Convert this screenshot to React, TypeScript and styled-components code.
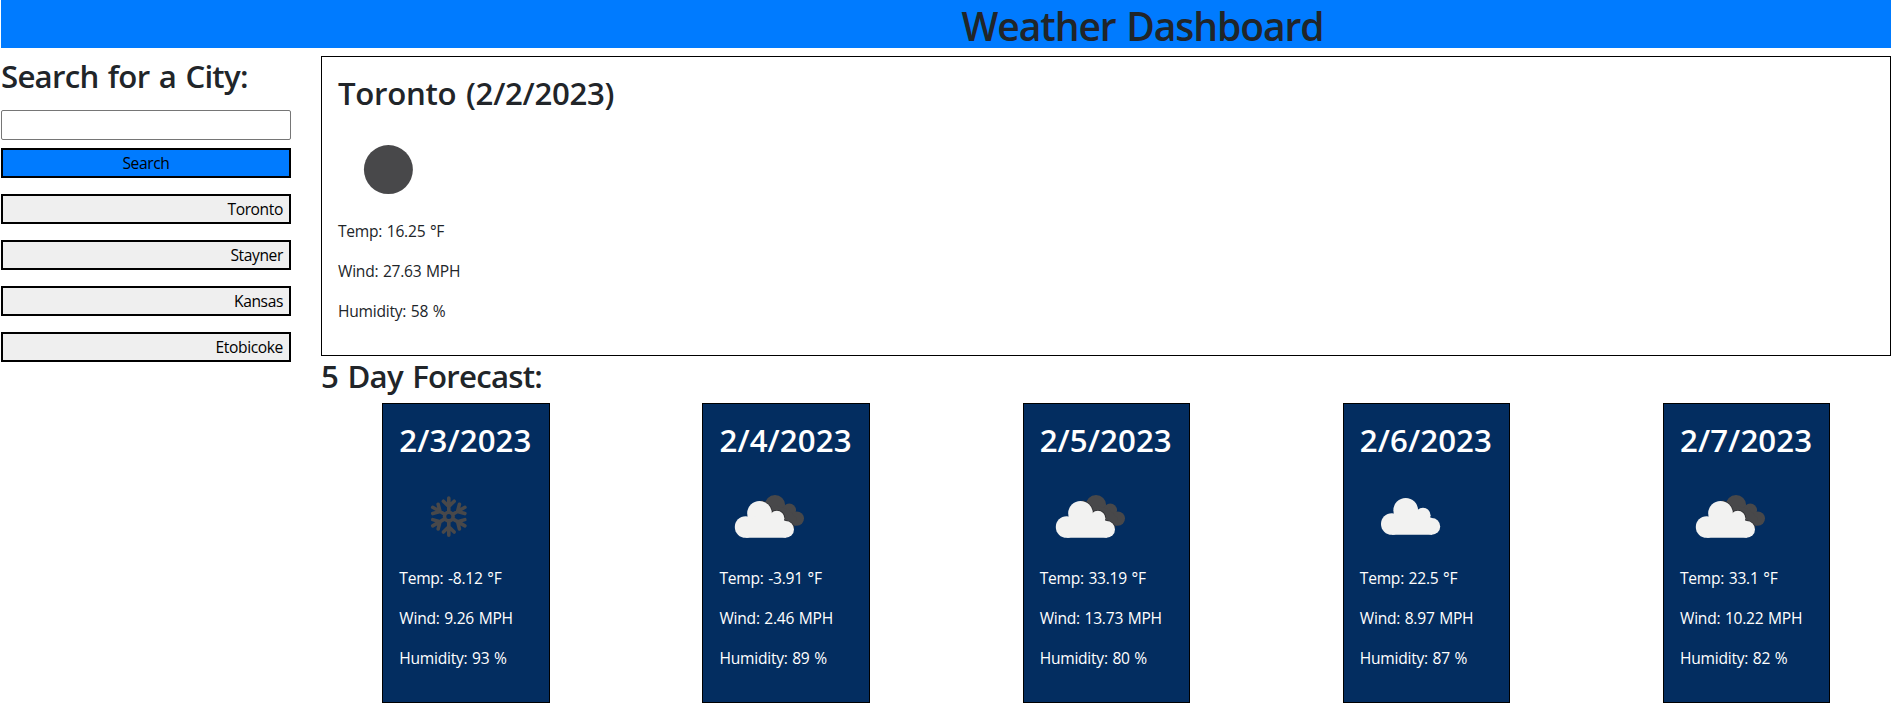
import React from "react";
import styled, { createGlobalStyle } from "styled-components";

const Global = createGlobalStyle`
  *, *::before, *::after { box-sizing: border-box; }
  body {
    margin: 0;
    background: #fff;
    color: #212529;
    font-family: "Open Sans", "Noto Sans", sans-serif;
    font-size: 15.6px;
    line-height: 24px;
    letter-spacing: -0.25px;
    word-spacing: 0.8px;
  }
`;

const Page = styled.div`padding: 0 3px 0 1px;`;

const Header = styled.header`
  height: 48px;
  padding-left: 393px;
  background: #007bff;
  text-align: center;
`;

const Title = styled.h1`
  margin: 0;
  padding-top: 2px;
  font-size: 39px;
  font-weight: 600;
  line-height: 48px;
  letter-spacing: -1.05px;
  word-spacing: 1.5px;
  white-space: nowrap;
`;

const Columns = styled.div`
  display: flex;
  gap: 30px;
  padding-top: 8px;
`;

const Sidebar = styled.aside`
  display: flex;
  flex-direction: column;
  width: 290px;
  flex: none;
`;

const Heading = styled.h2<{ $spacing?: number }>`
  margin: 0 0 7px;
  padding-top: 1px;
  font-size: 31.2px;
  font-weight: 600;
  line-height: 39px;
  letter-spacing: ${(p) => p.$spacing ?? -0.75}px;
  word-spacing: 2px;
  white-space: nowrap;
`;

const SearchInput = styled.input`
  height: 30px;
  margin: 7px 0 8px;
  border: 1px solid #767676;
  border-radius: 2px;
  background: #fff;
  font: inherit;
`;

const Button = styled.button<{ $primary?: boolean }>`
  height: 30px;
  margin: 0 0 16px;
  padding: 0 6px;
  border: 2px solid #000;
  background: ${(p) => (p.$primary ? "#007bff" : "#efefef")};
  color: #000;
  font: inherit;
  letter-spacing: -0.38px;
  line-height: 26px;
  text-align: ${(p) => (p.$primary ? "center" : "right")};
`;

const Main = styled.main`
  flex: 1;
  min-width: 0;
`;

const Panel = styled.section`
  height: 300px;
  padding: 16px;
  border: 1px solid #000;
`;

const Card = styled.article`
  width: 167.3px;
  height: 300px;
  padding: 16px;
  border: 1px solid #000;
  background: #032d60;
  color: #fff;
`;

const Forecast = styled.div`
  display: flex;
  justify-content: space-between;
  padding: 0 60.7px 0 61.3px;
`;

const Reading = styled.p`
  margin: 0 0 16px;
  white-space: nowrap;
`;

const Icon = styled.svg`
  display: block;
  width: 100px;
  height: 100px;
  margin-bottom: -1px;
`;

type Kind = "clear" | "snow" | "broken" | "cloudy";

function CloudShape({ x, y, outline }: { x: number; y: number; outline?: boolean }) {
  const shape = (
    <>
      <circle cx="10.8" cy="26" r="10.8" />
      <circle cx="24.7" cy="12.3" r="12.3" />
      <circle cx="42" cy="17.3" r="7.6" />
      <circle cx="50.8" cy="28.4" r="8.4" />
      <path d="M10.8 36.8H51L51 20L42 17L24 12L11 24Z" />
    </>
  );
  return (
    <g transform={`translate(${x} ${y})`}>
      {outline && (
        <>
          <clipPath id="behind"><path d="M27 -5H70V27H24Z" /></clipPath>
          <g clipPath="url(#behind)" fill="#303033" stroke="#303033" strokeWidth="1.6">{shape}</g>
        </>
      )}
      <g fill="#f2f2f1">{shape}</g>
    </g>
  );
}

function WeatherIcon({ kind }: { kind: Kind }) {
  return (
    <Icon viewBox="0 0 100 100">
      {kind === "clear" && <circle cx="50.4" cy="49.6" r="24.5" fill="#48484a" />}
      {kind === "snow" && (
        <g stroke="#48484a" strokeWidth="3.6" strokeLinecap="round" fill="none">
          <circle cx="49.8" cy="49.6" r="4.3" />
          {[0, 60, 120, 180, 240, 300].map((a) => (
            <path key={a} transform={`rotate(${a} 49.8 49.6)`} d="M49.8 44.5V31M49.8 39.5L44.4 34.2M49.8 39.5L55.2 34.2" />
          ))}
        </g>
      )}
      {kind === "broken" && (
        <>
          <g fill="#48484a">
            <circle cx="56" cy="38.2" r="10.2" />
            <circle cx="70.3" cy="43.2" r="6.7" />
            <circle cx="77.8" cy="51.6" r="7.2" />
            <path d="M56 38L70 43L78 52L77 58.7L58 56Z" />
          </g>
          <CloudShape x={15.8} y={34} outline />
        </>
      )}
      {kind === "cloudy" && <CloudShape x={21} y={31} />}
    </Icon>
  );
}

interface Weather {
  title: string;
  kind: Kind;
  temp: string;
  wind: string;
  humidity: number;
}

function Details({ w, spacing }: { w: Weather; spacing: number }) {
  return (
    <>
      <Heading $spacing={spacing}>{w.title}</Heading>
      <WeatherIcon kind={w.kind} />
      <Reading>Temp: {w.temp} °F</Reading>
      <Reading>Wind: {w.wind} MPH</Reading>
      <Reading>Humidity: {w.humidity} %</Reading>
    </>
  );
}

const today: Weather = { title: "Toronto (2/2/2023)", kind: "clear", temp: "16.25", wind: "27.63", humidity: 58 };
const days: Weather[] = [
  { title: "2/3/2023", kind: "snow", temp: "-8.12", wind: "9.26", humidity: 93 },
  { title: "2/4/2023", kind: "broken", temp: "-3.91", wind: "2.46", humidity: 89 },
  { title: "2/5/2023", kind: "broken", temp: "33.19", wind: "13.73", humidity: 80 },
  { title: "2/6/2023", kind: "cloudy", temp: "22.5", wind: "8.97", humidity: 87 },
  { title: "2/7/2023", kind: "broken", temp: "33.1", wind: "10.22", humidity: 82 },
];
const history = ["Toronto", "Stayner", "Kansas", "Etobicoke"];

export default function App() {
  return (
    <Page>
      <Global />
      <Header><Title>Weather Dashboard</Title></Header>
      <Columns>
        <Sidebar>
          <Heading>Search for a City:</Heading>
          <SearchInput aria-label="City" />
          <Button $primary>Search</Button>
          {history.map((c) => <Button key={c}>{c}</Button>)}
        </Sidebar>
        <Main>
          <Panel><Details w={today} spacing={-0.3} /></Panel>
          <Heading>5 Day Forecast:</Heading>
          <Forecast>
            {days.map((d) => <Card key={d.title}><Details w={d} spacing={0.1} /></Card>)}
          </Forecast>
        </Main>
      </Columns>
    </Page>
  );
}
